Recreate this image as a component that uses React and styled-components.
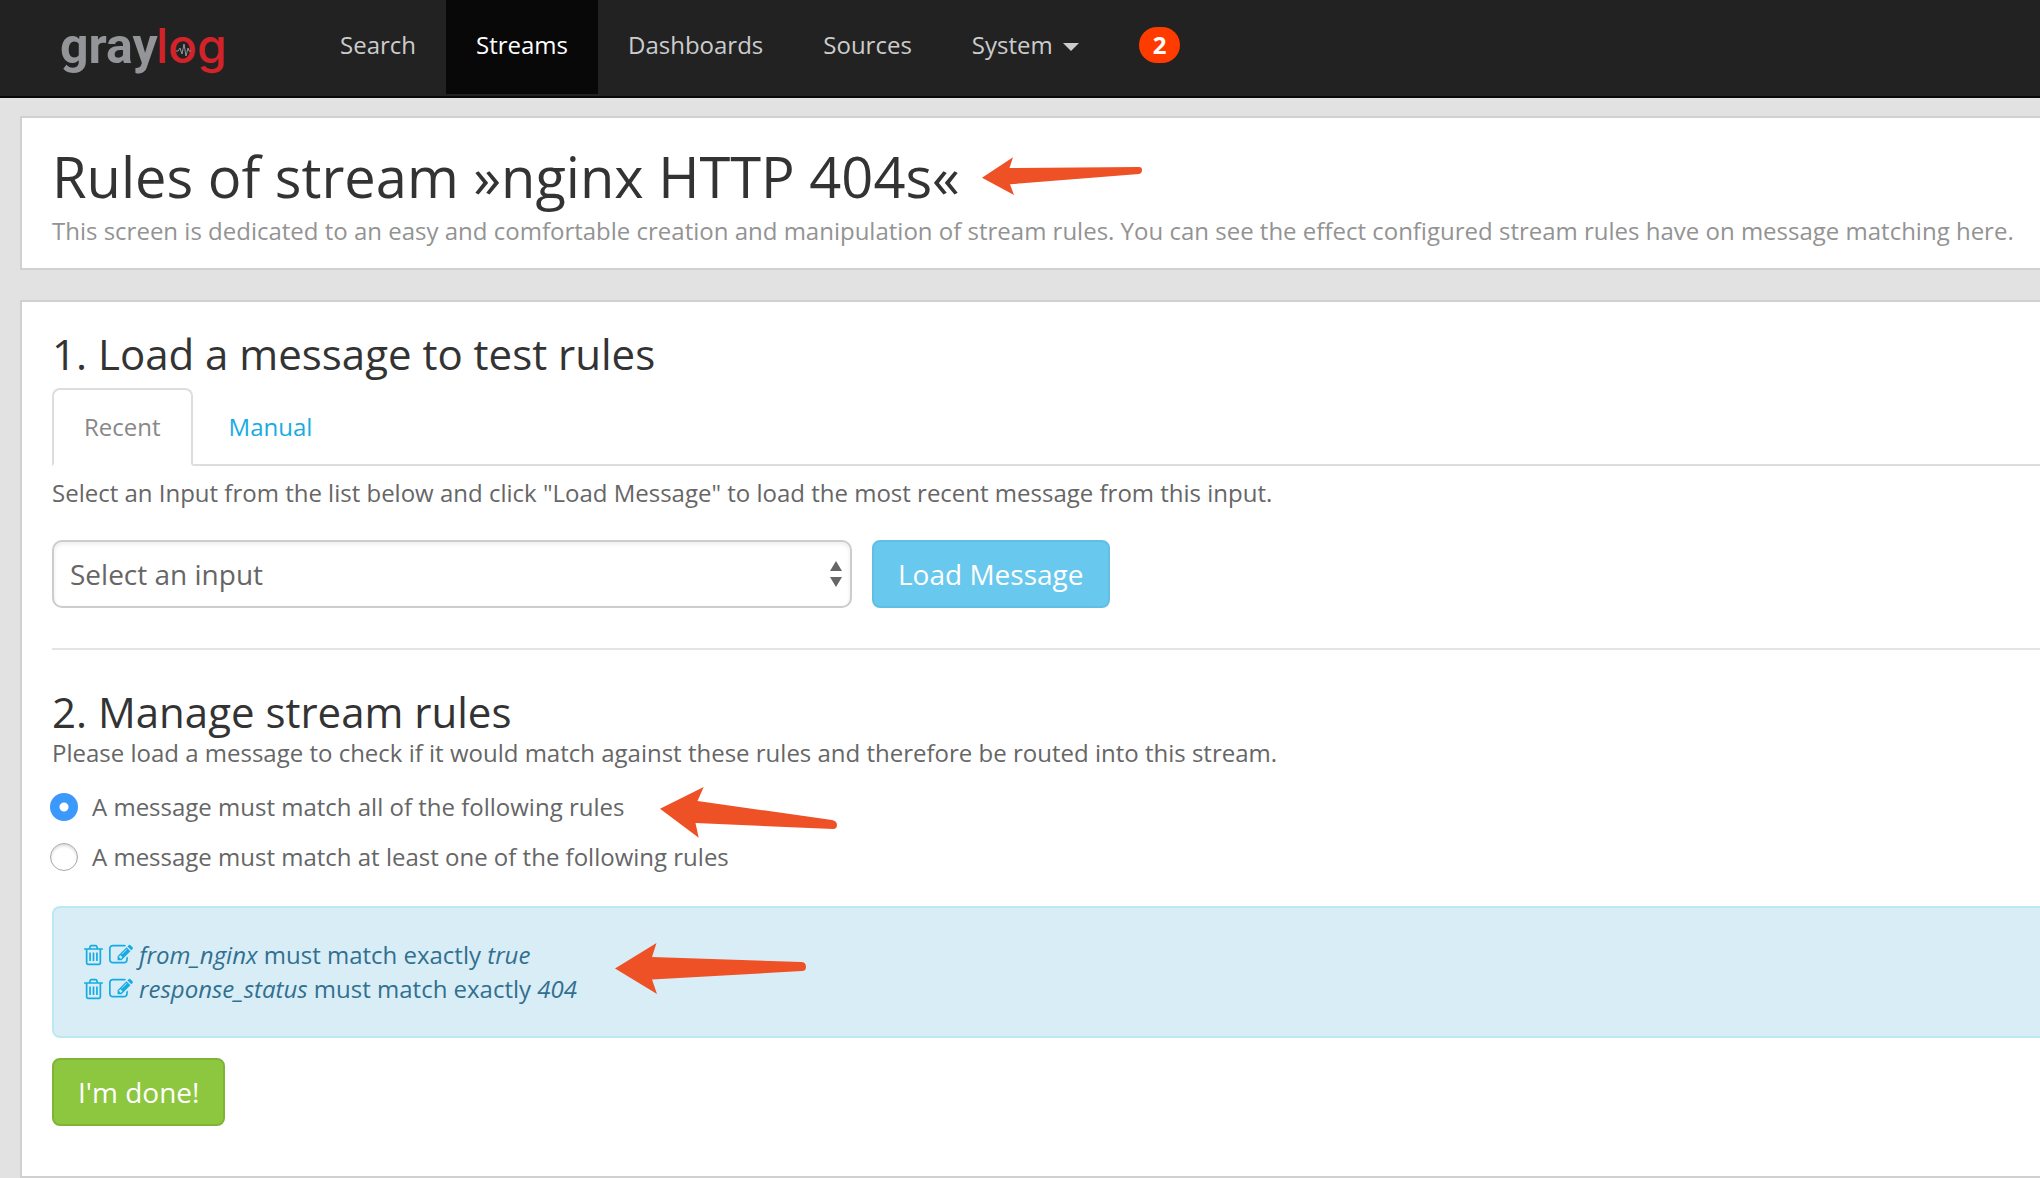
import React, { useState } from "react";
import styled, { createGlobalStyle } from "styled-components";

const GlobalStyle = createGlobalStyle`
  *, *::before, *::after { box-sizing: border-box; }
  body {
    margin: 0;
    background: #e2e2e2;
    color: #666;
    font-family: "Open Sans", "Noto Sans", sans-serif;
    font-size: 24px;
    line-height: 34px;
  }
  h1, h2, p, ul { margin: 0; padding: 0; font-weight: 400; }
  button, select, input { font-family: inherit; margin: 0; }
`;

const Page = styled.div`
  position: relative;
  overflow: hidden;
`;

const Navbar = styled.header`
  display: flex;
  height: 98px;
  background: #222;
  border-bottom: 2px solid #080808;
`;

const Brand = styled.a`
  display: block;
  width: 310px;
  padding: 8px 0 0 60px;

  svg { display: block; }
`;

const NavMenu = styled.nav`
  display: flex;
  height: 94px;
`;

const NavLink = styled.a`
  display: flex;
  align-items: center;
  gap: 10px;
  padding: 0 30px 4px;
  color: ${(p) => (p.$active ? "#fff" : "#ccc")};
  background: ${(p) => (p.$active ? "#080808" : "transparent")};
  text-decoration: none;
`;

const Caret = styled.span`
  border: 8px solid transparent;
  border-top-color: #ccc;
  border-bottom: 0;
  margin-top: 4px;
`;

const Badge = styled.span`
  padding: 0 14px;
  border-radius: 18px;
  background: #ff3b00;
  color: #fff;
  font-weight: 700;
  line-height: 36px;
`;

const Panel = styled.section`
  display: flex;
  flex-direction: column;
  margin: ${(p) => (p.$first ? "18px" : "30px")} 0 0 20px;
  padding: 28px 0 ${(p) => (p.$first ? "20px" : "50px")} 30px;
  background: #fff;
  border: 2px solid #d0d0d0;
  border-right: 0;
`;

const Title = styled.h1`
  margin-bottom: 8px;
  color: #333;
  font-size: 56px;
  line-height: 60px;
`;

const Lead = styled.p`
  color: #939393;
`;

const SectionTitle = styled.h2`
  color: #333;
  font-size: 42px;
  line-height: 48px;
`;

const Tabs = styled.div`
  display: flex;
  gap: 4px;
  margin: 10px 0;
  box-shadow: inset 0 -2px 0 #ddd;
`;

const Tab = styled.button`
  padding: 20px 30px;
  border: 2px solid ${(p) => (p.$active ? "#ddd" : "transparent")};
  border-bottom-color: ${(p) => (p.$active ? "#fff" : "transparent")};
  border-radius: 8px 8px 0 0;
  background: ${(p) => (p.$active ? "#fff" : "transparent")};
  color: ${(p) => (p.$active ? "#888" : "#16ace3")};
  font-size: 24px;
  line-height: 34px;
`;

const LoadForm = styled.form`
  display: flex;
  gap: 20px;
  margin-top: 30px;
`;

const SelectBox = styled.label`
  position: relative;
  width: 800px;

  svg {
    position: absolute;
    top: 20px;
    right: 9px;
    pointer-events: none;
  }
`;

const Select = styled.select`
  appearance: none;
  display: block;
  width: 100%;
  height: 68px;
  padding: 0 16px;
  border: 2px solid #ccc;
  border-radius: 10px;
  background: #fff;
  box-shadow: inset 0 2px 4px rgba(0, 0, 0, 0.08);
  color: #666;
  font-size: 28px;
`;

const Button = styled.button`
  align-self: flex-start;
  height: 68px;
  padding: 0 24px;
  border: 2px solid ${(p) => (p.$green ? "#7eb534" : "#62bfe3")};
  border-radius: 8px;
  background: ${(p) => (p.$green ? "#8dc63f" : "#69c8ed")};
  color: #fff;
  font-size: 28px;
`;

const Divider = styled.hr`
  width: 100%;
  height: 2px;
  margin: 40px 0 38px;
  border: 0;
  background: #e4e4e4;
`;

const Matching = styled.div`
  display: flex;
  flex-direction: column;
  align-items: flex-start;
  gap: 16px;
  margin: 20px 0 32px -2px;
`;

const Option = styled.label`
  display: flex;
  align-items: center;
  gap: 14px;
`;

const Radio = styled.input`
  appearance: none;
  width: 28px;
  height: 28px;
  border: 1px solid #a8a8a8;
  border-radius: 50%;
  background: #fff;
  box-shadow: inset 0 2px 3px rgba(0, 0, 0, 0.14);

  &:checked {
    border: 0;
    background: radial-gradient(circle, #fff 4px, #3b99fc 5px);
    box-shadow: none;
  }
`;

const RuleList = styled.ul`
  margin-bottom: 20px;
  padding: 30px;
  border: 2px solid #bce8f1;
  border-right: 0;
  border-radius: 8px 0 0 8px;
  background: #d9edf7;
  color: #31708f;
  list-style: none;
`;

const Rule = styled.li`
  display: flex;
  align-items: center;
  gap: 6px;
`;

const IconButton = styled.button`
  display: flex;
  padding: 0;
  border: 0;
  background: none;
  color: #16ace3;
`;

const Arrow = styled.svg`
  position: absolute;
  left: ${(p) => p.$x}px;
  top: ${(p) => p.$y}px;
  fill: #ef5126;
  pointer-events: none;
`;

const Logo = () => (
  <svg width="190" height="80" viewBox="0 0 190 80" role="img" aria-label="graylog">
    <text x="0" y="55" fill="#939598" fontFamily="Roboto, sans-serif" fontSize="50" fontWeight="700">gray</text>
    <text x="96" y="55" fill="#d2232a" fontFamily="Inter, sans-serif" fontSize="48" fontWeight="500">log</text>
    <path d="M116 43h2l2-3 2 6 2-10 2 12 2-8 1 3h2" fill="none" stroke="#939598" strokeWidth="1" />
  </svg>
);

const TrashIcon = () => (
  <svg width="19" height="24" viewBox="192 0 1408 1792" fill="currentColor" aria-hidden="true">
    <path d="M704 736v576q0 14-9 23t-23 9h-64q-14 0-23-9t-9-23v-576q0-14 9-23t23-9h64q14 0 23 9t9 23zm256 0v576q0 14-9 23t-23 9h-64q-14 0-23-9t-9-23v-576q0-14 9-23t23-9h64q14 0 23 9t9 23zm256 0v576q0 14-9 23t-23 9h-64q-14 0-23-9t-9-23v-576q0-14 9-23t23-9h64q14 0 23 9t9 23zm128 724v-948h-896v948q0 22 7 40.5t14.5 27 10.5 8.5h832q3 0 10.5-8.5t14.5-27 7-40.5zm-672-1076h448l-48-117q-7-9-17-11h-317q-10 2-17 11zm928 32v64q0 14-9 23t-23 9h-96v948q0 83-47 143.5t-113 60.5h-832q-66 0-113-58.5t-47-141.5v-952h-96q-14 0-23-9t-9-23v-64q0-14 9-23t23-9h309l70-167q15-37 54-63t79-26h320q40 0 79 26t54 63l70 167h309q14 0 23 9t9 23z" />
  </svg>
);

const EditIcon = () => (
  <svg width="24" height="24" viewBox="0 0 1792 1792" fill="currentColor" aria-hidden="true">
    <path d="M888 1184l116-116-152-152-116 116v56h96v96h56zm440-720q-16-16-33 1l-350 350q-17 17-1 33t33-1l350-350q17-17 1-33zm80 594v190q0 119-84.5 203.5t-203.5 84.5h-832q-119 0-203.5-84.5t-84.5-203.5v-832q0-119 84.5-203.5t203.5-84.5h832q63 0 117 25 15 7 18 23 3 17-9 29l-49 49q-14 14-32 8-23-6-45-6h-832q-66 0-113 47t-47 113v832q0 66 47 113t113 47h832q66 0 113-47t47-113v-126q0-13 9-22l64-64q15-15 35-7t20 29zm-96-738l288 288-672 672h-288v-288zm444 132l-92 92-288-288 92-92q28-28 68-28t68 28l152 152q28 28 28 68t-28 68z" />
  </svg>
);

const navItems = ["Search", "Streams", "Dashboards", "Sources"];

const matchOptions = [
  { value: "all", label: "A message must match all of the following rules" },
  { value: "any", label: "A message must match at least one of the following rules" },
];

const rules = [
  { field: "from_nginx", value: "true" },
  { field: "response_status", value: "404" },
];

export default function App() {
  const [match, setMatch] = useState("all");

  return (
    <Page>
      <GlobalStyle />
      <Navbar>
        <Brand href="#"><Logo /></Brand>
        <NavMenu>
          {navItems.map((item) => (
            <NavLink key={item} href="#" $active={item === "Streams"}>{item}</NavLink>
          ))}
          <NavLink href="#">System<Caret /></NavLink>
          <NavLink href="#"><Badge>2</Badge></NavLink>
        </NavMenu>
      </Navbar>

      <main>
        <Panel $first>
          <Title>Rules of stream »nginx HTTP 404s«</Title>
          <Lead>
            This screen is dedicated to an easy and comfortable creation and manipulation of stream
            rules. You can see the effect configured stream rules have on message matching here.
          </Lead>
        </Panel>

        <Panel>
          <SectionTitle>1. Load a message to test rules</SectionTitle>
          <Tabs role="tablist">
            <Tab type="button" role="tab" aria-selected="true" $active>Recent</Tab>
            <Tab type="button" role="tab" aria-selected="false">Manual</Tab>
          </Tabs>
          <p>
            Select an Input from the list below and click "Load Message" to load the most recent
            message from this input.
          </p>
          <LoadForm onSubmit={(e) => e.preventDefault()}>
            <SelectBox>
              <Select aria-label="Input">
                <option>Select an input</option>
              </Select>
              <svg width="14" height="28" viewBox="0 0 14 28" fill="#666" aria-hidden="true">
                <path d="M7 1l6 10H1zM7 27l6-10H1z" />
              </svg>
            </SelectBox>
            <Button type="submit">Load Message</Button>
          </LoadForm>

          <Divider />

          <SectionTitle>2. Manage stream rules</SectionTitle>
          <p>
            Please load a message to check if it would match against these rules and therefore be
            routed into this stream.
          </p>
          <Matching role="radiogroup">
            {matchOptions.map((o) => (
              <Option key={o.value}>
                <Radio
                  type="radio"
                  name="match"
                  checked={match === o.value}
                  onChange={() => setMatch(o.value)}
                />
                {o.label}
              </Option>
            ))}
          </Matching>
          <RuleList>
            {rules.map((r) => (
              <Rule key={r.field}>
                <IconButton type="button" aria-label="Delete rule"><TrashIcon /></IconButton>
                <IconButton type="button" aria-label="Edit rule"><EditIcon /></IconButton>
                <span><em>{r.field}</em> must match exactly <em>{r.value}</em></span>
              </Rule>
            ))}
          </RuleList>
          <Button type="button" $green>I'm done!</Button>
        </Panel>
      </main>

      <Arrow $x={982} $y={157} width="162" height="40" aria-hidden="true">
        <path d="M0 20.7L31 0.3 27.5 11 157 10q3 0 3 3.3 0 3-3 3.6L28 27.3 32 38z" />
      </Arrow>
      <Arrow $x={660} $y={787} width="180" height="52" aria-hidden="true">
        <path d="M0 21.7L43.7 0 37.5 14 172 33q5 1 5 5 0 4-4 4L35.5 36 38.7 50.7z" />
      </Arrow>
      <Arrow $x={615} $y={943} width="194" height="52" aria-hidden="true">
        <path d="M0 25.5L41.5 0 37 14 186 19q5 0 5 5 0 4-4 4L37 36.5 42 51z" />
      </Arrow>
    </Page>
  );
}
